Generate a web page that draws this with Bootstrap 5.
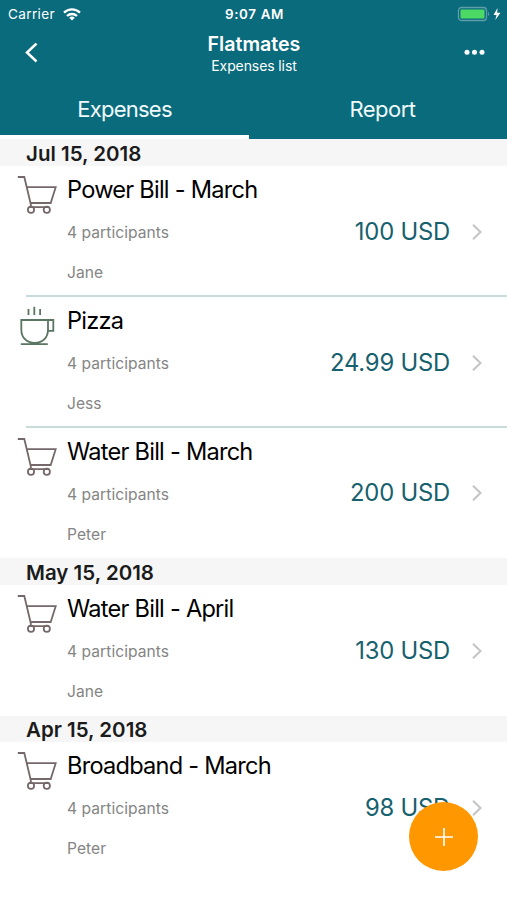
<!DOCTYPE html>
<html lang="en">
<head>
<meta charset="utf-8">
<meta name="viewport" content="width=device-width, initial-scale=1">
<title>Flatmates</title>
<link href="https://cdn.jsdelivr.net/npm/bootstrap@5.3.0/dist/css/bootstrap.min.css" rel="stylesheet">
<style>
body { font-family: Inter, "Liberation Sans", sans-serif; background: #fff; color: #0a0a0a; height: 900px; overflow: hidden; }
.app-head { background: #0a6b7d; color: #fff; height: 139px; }
.status { height: 28px; padding: 0 6px 0 8px; font-size: 13.6px; line-height: 28px; }
.status > div { flex: 1 1 0; }
.carrier { letter-spacing: .35px; }
.clock { font-weight: 600; font-size: 13.4px; letter-spacing: .65px; }
.title-bar { height: 52px; padding: 0 22px 0 24px; }
.title-bar h1 { font-size: 19.6px; font-weight: 600; line-height: 24px; padding-top: 4px; letter-spacing: 0; }
.title-bar p { font-size: 14px; line-height: 20px; letter-spacing: -.1px; }
.heading { margin-left: -1px; }
.side { width: 24px; }
.side-back { padding-top: 15px; }
.tabs { height: 59px; }
.tab-item { font-size: 22px; line-height: 58px; border-bottom: 4px solid transparent; color: #effafb; height: 59px; letter-spacing: -.75px; padding-left: 9px; }
.tab-item.on { border-color: #fff; width: 249px; flex: none; padding-left: 0; }
.tab-item.flex-fill { letter-spacing: -.55px; }
.day { background: #f6f6f6; height: 27px; line-height: 29px; padding-left: 26px; font-size: 20.5px; font-weight: 600; color: #1b1b1b; }
.day-group:nth-child(n+3) .day { height: 26px; line-height: 28px; }
.entry { height: 131px; position: relative; }
.entry + .entry::before { content: ""; position: absolute; left: 26px; right: 0; top: -2px; height: 2px; background: #c9dadb; }
.day-group:first-child .entry:last-child { height: 130px; }
.pic { width: 67px; padding: 9px 0 0 17px; }
.name { font-size: 23.6px; line-height: 47px; letter-spacing: -.76px; color: #000; }
.meta { font-size: 15.6px; line-height: 40px; color: #858585; letter-spacing: .05px; }
.sum { font-size: 23.8px; color: #17616e; letter-spacing: -.2px; line-height: 40px; padding-right: 21px; }
.go { margin-right: 24px; }
.add { position: absolute; left: 409px; top: 802px; width: 69px; height: 69px; background: #ff9800; }
svg { display: block; }
</style>
</head>
<body class="position-relative">
<svg width="0" height="0" class="position-absolute">
  <symbol id="cart" viewBox="0 0 42 40"><g fill="none" stroke="#75686a" stroke-width="1.8"><path d="M.8 2h6.500l6.500 27.200M9.200 12.200h29.500L33.700 28H13.600M13.800 28v5M12 32.200h20"/><circle cx="14" cy="34.800" r="3.100"/><circle cx="29.800" cy="34.800" r="3.100"/></g></symbol>
  <symbol id="cup" viewBox="0 0 42 40"><g fill="none" stroke="#5b7563" stroke-width="1.800"><path d="M4.300 14h26.700v9.500c0 8-5 13.400-13.300 13.400S4.300 31.500 4.300 23.500zM31 14h5.300v10.800H31M3.800 38.200h27M11.500 3v6M17.300 .8v8.200M23.100 3v6"/></g></symbol>
  <symbol id="next" viewBox="0 0 12 18"><path d="M2 1.800 9.500 9 2 16.200" fill="none" stroke="#c4c4c6" stroke-width="2"/></symbol>
</svg>
<header class="app-head">
  <div class="status d-flex align-items-center">
    <div class="d-flex align-items-center"><span class="carrier">Carrier</span>
      <svg class="ms-2" width="18" height="13" viewBox="0 0 18 13"><g fill="none" stroke="#fff" stroke-width="2.300"><path d="M1 4.700a11.500 11.500 0 0 1 16 0M4 8a7.300 7.300 0 0 1 10 0"/></g><path d="M9 12.600 6.200 9.800a4 4 0 0 1 5.600 0z" fill="#fff"/></svg>
    </div>
    <div class="clock text-center">9:07 AM</div>
    <div class="d-flex justify-content-end align-items-center">
      <svg width="44" height="16" viewBox="0 0 44 16"><rect x="1.500" y="1.500" width="28" height="13" rx="3" fill="none" stroke="#5e9eab" stroke-width="1.300"/><rect x="3.500" y="3.500" width="24" height="9" rx="1" fill="#4cd964"/><path d="M31 6c1.600.6 1.600 3.400 0 4z" fill="#5e9eab"/><path d="M40.500 2 36.500 9h3l-1.200 5L43.500 6.800h-3.300z" fill="#fff"/></svg>
    </div>
  </div>
  <div class="title-bar d-flex justify-content-between">
    <div class="side side-back"><svg width="16" height="20" viewBox="0 -1 16 20"><path d="M12.500-.5 3 8.500l9.500 9" fill="none" stroke="#fff" stroke-width="2.500"/></svg></div>
    <div class="heading text-center"><h1 class="m-0">Flatmates</h1><p class="m-0">Expenses list</p></div>
    <div class="side pt-3"><svg width="24" height="16" viewBox="0 0 24 16"><g fill="#fff"><circle cx="6" cy="8.300" r="2.500"/><circle cx="13.500" cy="8.300" r="2.500"/><circle cx="21" cy="8.300" r="2.500"/></g></svg></div>
  </div>
  <nav class="tabs d-flex text-center">
    <div class="tab-item on">Expenses</div>
    <div class="tab-item flex-fill">Report</div>
  </nav>
</header>
<main>
  <section class="day-group">
    <div class="day">Jul 15, 2018</div>
    <div class="entry d-flex"><div class="pic"><svg width="42" height="40"><use href="#cart"/></svg></div><div class="flex-fill"><div class="name">Power Bill - March</div><div class="meta">4 participants</div><div class="meta">Jane</div></div><div class="d-flex align-items-center"><span class="sum">100 USD</span><svg class="go" width="12" height="18"><use href="#next"/></svg></div></div>
    <div class="entry d-flex"><div class="pic"><svg width="42" height="40"><use href="#cup"/></svg></div><div class="flex-fill"><div class="name">Pizza</div><div class="meta">4 participants</div><div class="meta">Jess</div></div><div class="d-flex align-items-center"><span class="sum">24.99 USD</span><svg class="go" width="12" height="18"><use href="#next"/></svg></div></div>
    <div class="entry d-flex"><div class="pic"><svg width="42" height="40"><use href="#cart"/></svg></div><div class="flex-fill"><div class="name">Water Bill - March</div><div class="meta">4 participants</div><div class="meta">Peter</div></div><div class="d-flex align-items-center"><span class="sum">200 USD</span><svg class="go" width="12" height="18"><use href="#next"/></svg></div></div>
  </section>
  <section class="day-group">
    <div class="day">May 15, 2018</div>
    <div class="entry d-flex"><div class="pic"><svg width="42" height="40"><use href="#cart"/></svg></div><div class="flex-fill"><div class="name">Water Bill - April</div><div class="meta">4 participants</div><div class="meta">Jane</div></div><div class="d-flex align-items-center"><span class="sum">130 USD</span><svg class="go" width="12" height="18"><use href="#next"/></svg></div></div>
  </section>
  <section class="day-group">
    <div class="day">Apr 15, 2018</div>
    <div class="entry d-flex"><div class="pic"><svg width="42" height="40"><use href="#cart"/></svg></div><div class="flex-fill"><div class="name">Broadband - March</div><div class="meta">4 participants</div><div class="meta">Peter</div></div><div class="d-flex align-items-center"><span class="sum">98 USD</span><svg class="go" width="12" height="18"><use href="#next"/></svg></div></div>
  </section>
</main>
<div class="add rounded-circle d-flex align-items-center justify-content-center" role="button" aria-label="Add expense">
  <svg width="20" height="20" viewBox="0 0 20 20"><path d="M10 1v18M1 10h18" stroke="#fff" stroke-width="1.600"/></svg>
</div>
<script src="https://cdn.jsdelivr.net/npm/bootstrap@5.3.0/dist/js/bootstrap.bundle.min.js"></script>
</body>
</html>
